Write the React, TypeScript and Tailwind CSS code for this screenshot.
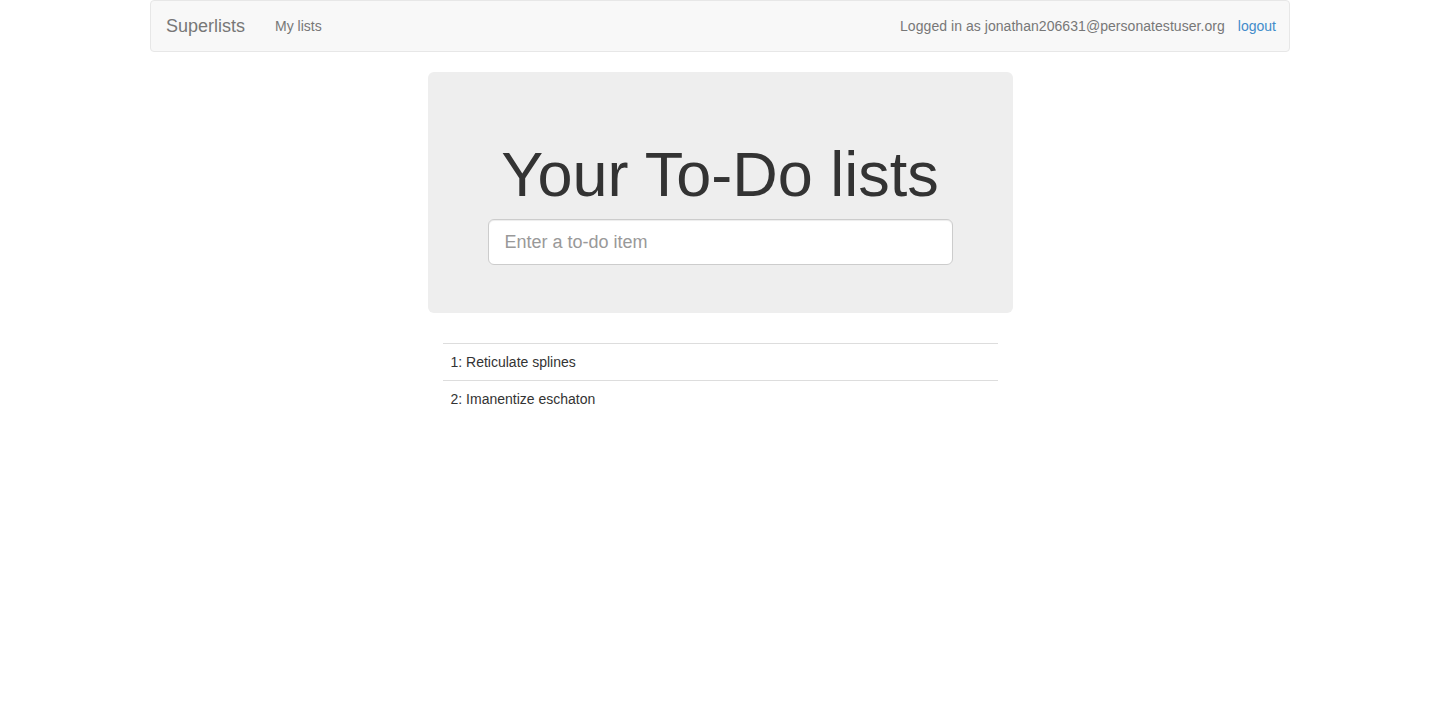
const items = ["Reticulate splines", "Imanentize eschaton"];

const App = () => {
  return (
    <div className="min-h-[711px] bg-white font-['Liberation_Sans',Arial,sans-serif] text-[14px] leading-[20px] text-[#333]">
      <div className="mx-auto w-[1170px] px-[15px]">
        {/* navbar */}
        <nav className="flex h-[52px] items-center justify-between rounded-[4px] border border-[#e7e7e7] bg-[#f8f8f8] pl-[15px] pr-[13px]">
          <div className="flex items-center">
            <a className="text-[18px] leading-[20px] text-[#777]">Superlists</a>
            <a className="ml-[30px] text-[#777]">My lists</a>
          </div>
          <div className="flex items-center">
            <span className="text-[#777] tracking-[0.05px]">Logged in as jonathan206631@personatestuser.org</span>
            <a className="ml-[13px] text-[#428bca]">logout</a>
          </div>
        </nav>

        <div className="mt-[20px] flex justify-center">
          <div className="w-[585px]">
            {/* jumbotron */}
            <div className="rounded-[6px] bg-[#eee] px-[60px] pt-[48px] pb-[48px] text-center">
              <h1 className="mt-[20px] mb-[10px] text-[63px] leading-[69px] font-normal text-[#333]">
                Your To-Do lists
              </h1>
              <input
                placeholder="Enter a to-do item"
                className="block h-[46px] w-full rounded-[6px] border border-[#ccc] bg-white px-[16px] text-[18px] text-[#555] shadow-[inset_0_1px_1px_rgba(0,0,0,0.075)] outline-none placeholder:text-[#999]"
              />
            </div>

            {/* list table */}
            <div className="mx-[15px] mt-[30px]">
              {items.map((item, i) => (
                <div key={item} className="border-t border-[#ddd] p-[8px] leading-[20px]">
                  {i + 1}: {item}
                </div>
              ))}
            </div>
          </div>
        </div>
      </div>
    </div>
  );
};

export default App;
